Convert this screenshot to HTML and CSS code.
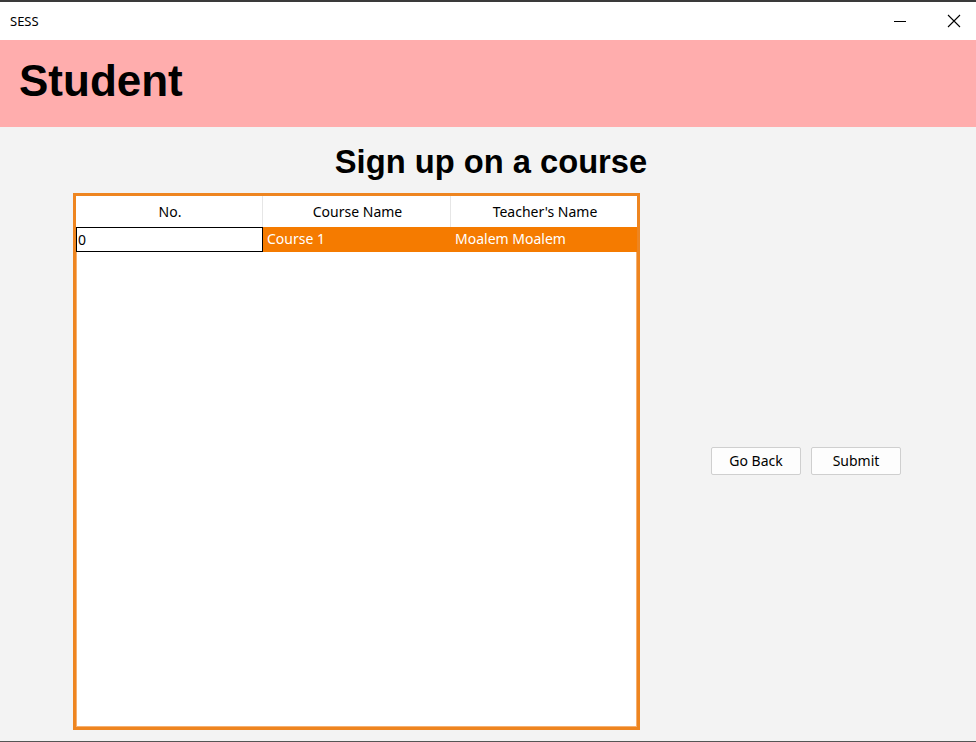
FILE: index.html
```html
<!DOCTYPE html>
<html>
<head>
<meta charset="utf-8">
<link rel="stylesheet" href="styles.css">
</head>
<body>
<div class="window">
  <div class="titlebar">
    <span class="app-title">SESS</span>
    <div class="controls">
      <span class="ctl ctl-min"><svg width="14" height="14" viewBox="0 0 14 14"><path d="M1 7.5h12" stroke="#000" stroke-width="1"/></svg></span>
      <span class="ctl ctl-close"><svg width="14" height="14" viewBox="0 0 14 14"><path d="M1 1L13 13M13 1L1 13" stroke="#000" stroke-width="1.1"/></svg></span>
    </div>
  </div>
  <div class="header"><h1>Student</h1></div>
  <div class="main">
    <h2 class="heading">Sign up on a course</h2>
    <div class="content">
      <div class="grid">
        <div class="grid-head">
          <div class="hcell">No.</div>
          <div class="hcell">Course Name</div>
          <div class="hcell">Teacher's Name</div>
        </div>
        <div class="grid-row">
          <div class="cell cell-focus">0</div>
          <div class="cell cell-sel">Course 1</div>
          <div class="cell cell-sel">Moalem Moalem</div>
        </div>
      </div>
      <div class="actions">
        <button class="btn">Go Back</button>
        <button class="btn">Submit</button>
      </div>
    </div>
  </div>
</div>
</body>
</html>
```
FILE: styles.css
```css
html, body {
  margin: 0;
  padding: 0;
}
body {
  width: 976px;
  height: 742px;
  overflow: hidden;
  background: #f3f3f3;
  font-family: "Noto Sans", "Open Sans", sans-serif;
}
.window {
  width: 976px;
  height: 742px;
  box-sizing: border-box;
  border-top: 2px solid #3a3a3a;
  border-bottom: 1px solid #555;
  display: flex;
  flex-direction: column;
  background: #f3f3f3;
}
.titlebar {
  height: 38px;
  background: #fff;
  display: flex;
  align-items: center;
  justify-content: space-between;
  flex-shrink: 0;
}
.app-title {
  font-size: 13px;
  color: #000;
  padding-left: 10px;
  margin-top: -1px;
}
.controls {
  display: flex;
  align-items: center;
  margin-top: -1px;
}
.ctl {
  display: flex;
  width: 14px;
  height: 14px;
}
.ctl-min {
  margin-right: 40px;
}
.ctl-close {
  margin-right: 15px;
}
.header {
  height: 87px;
  background: #ffadad;
  display: flex;
  align-items: center;
  flex-shrink: 0;
}
.header h1 {
  margin: -5px 0 0 0;
  padding-left: 19px;
  font-family: "Liberation Sans", Arial, sans-serif;
  font-weight: bold;
  font-size: 44px;
  line-height: 50px;
  color: #000;
}
.main {
  flex: 1;
  display: flex;
  flex-direction: column;
}
.heading {
  margin: 16px 0 0 0;
  padding-left: 6px;
  text-align: center;
  font-family: "Liberation Sans", Arial, sans-serif;
  font-weight: bold;
  font-size: 32.7px;
  line-height: 37px;
  color: #000;
}
.content {
  margin-top: 13px;
  display: flex;
  align-items: center;
  padding-left: 73px;
}
.grid {
  width: 567px;
  height: 537px;
  box-sizing: border-box;
  border: 3px solid #ee8520;
  box-shadow: inset 0 0 0 1px #f6b070;
  background: #fff;
  display: flex;
  flex-direction: column;
}
.grid-head {
  display: grid;
  grid-template-columns: 187px 188px 186px;
  height: 31px;
}
.hcell {
  display: flex;
  align-items: center;
  justify-content: center;
  font-size: 14px;
  color: #000;
  border-right: 1px solid #e6e6e6;
  background: #fff;
  padding-left: 2px;
}
.hcell:last-child {
  border-right: none;
}
.grid-row {
  display: grid;
  grid-template-columns: 187px 188px 186px;
  height: 25px;
}
.cell {
  font-size: 14px;
  line-height: 23px;
  white-space: nowrap;
}
.cell-focus {
  border: 1px solid #000;
  padding-left: 1px;
  color: #000;
  background: #fff;
}
.cell-sel {
  background: #f57b00;
  color: #fff;
  padding-left: 4px;
  line-height: 24px;
}
.actions {
  display: flex;
  gap: 10px;
  margin-left: 71px;
  margin-top: -2px;
}
.btn {
  width: 90px;
  height: 28px;
  box-sizing: border-box;
  border: 1px solid #cfcfcf;
  border-radius: 2px;
  background: #fdfdfd;
  font-family: "Noto Sans", "Open Sans", sans-serif;
  font-size: 14px;
  color: #000;
  padding: 0;
}
```
